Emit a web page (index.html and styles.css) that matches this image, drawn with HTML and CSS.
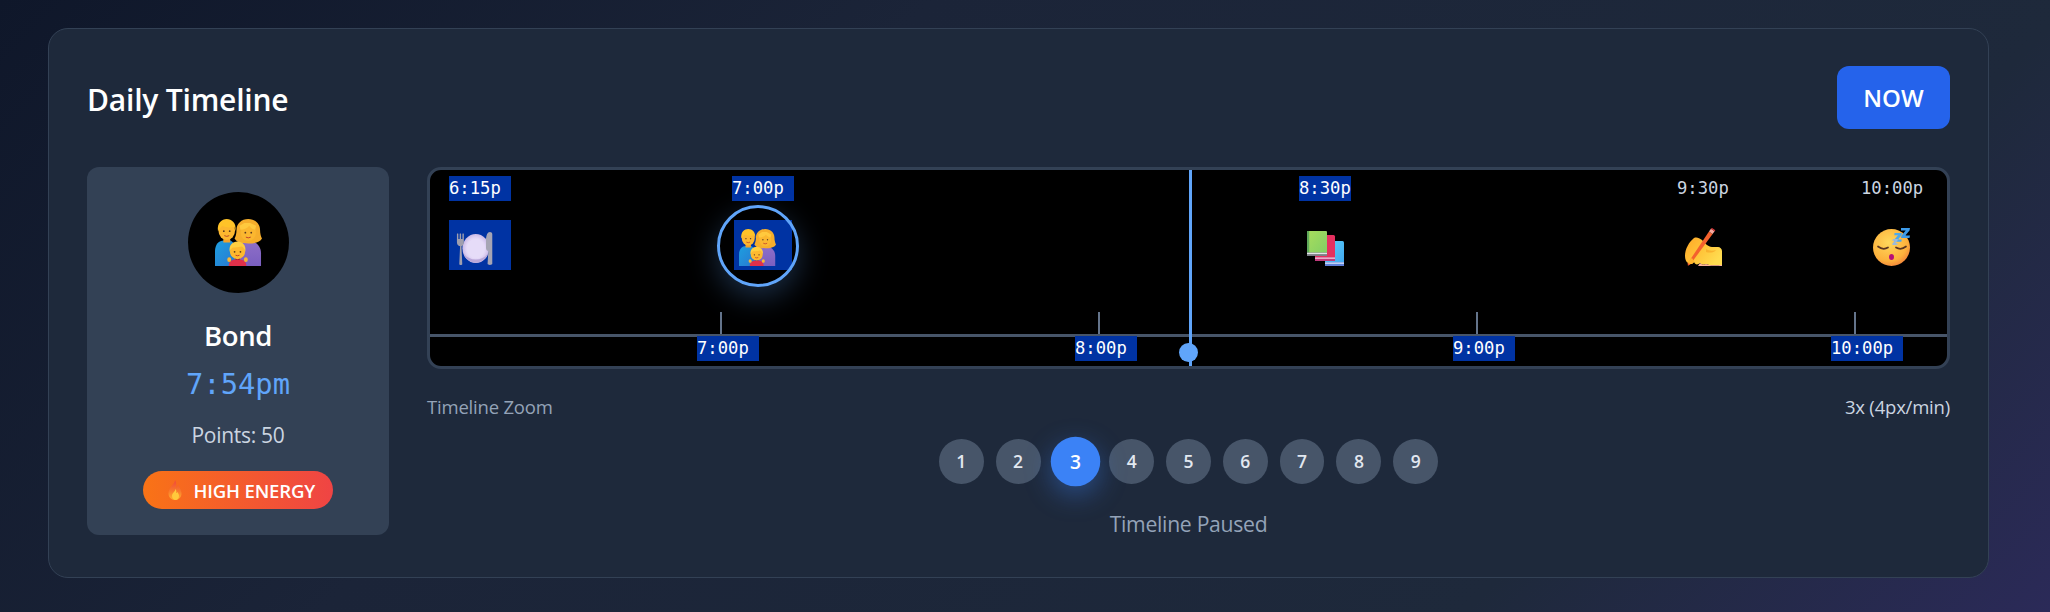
FILE: index.html
```html
<!DOCTYPE html>
<html lang="en">
<head>
<meta charset="utf-8">
<title>Daily Timeline</title>
<link rel="stylesheet" href="styles.css">
</head>
<body>
<svg class="defs" width="0" height="0" aria-hidden="true">
  <defs>
    <linearGradient id="gBlue" x1="0" y1="0" x2="1" y2="1"><stop offset="0" stop-color="#1d9fe0"/><stop offset="1" stop-color="#2a78d0"/></linearGradient>
    <linearGradient id="gPurple" x1="0" y1="0" x2="0" y2="1"><stop offset="0" stop-color="#8f6fc8"/><stop offset="1" stop-color="#7a5fc0"/></linearGradient>
    <radialGradient id="gPlate" cx=".5" cy=".5" r=".5"><stop offset="0" stop-color="#efe6fb"/><stop offset=".72" stop-color="#e2d6f6"/><stop offset="1" stop-color="#c9b9e6"/></radialGradient>
    <linearGradient id="gGreen" x1="0" y1="0" x2="1" y2="1"><stop offset="0" stop-color="#a9dd5c"/><stop offset="1" stop-color="#7fce66"/></linearGradient>
    <linearGradient id="gSky" x1="0" y1="0" x2="1" y2="1"><stop offset="0" stop-color="#5cd2fa"/><stop offset="1" stop-color="#3fa4ee"/></linearGradient>
    <radialGradient id="gFace" cx=".42" cy=".36" r=".72"><stop offset="0" stop-color="#ffd85c"/><stop offset=".7" stop-color="#fdb13c"/><stop offset="1" stop-color="#f0793a"/></radialGradient>
    <linearGradient id="gHand" x1="0" y1="0" x2="1" y2=".6"><stop offset="0" stop-color="#ffa726"/><stop offset=".55" stop-color="#ffc53a"/><stop offset="1" stop-color="#ffdc50"/></linearGradient>
    <linearGradient id="gFlame" x1="0" y1="0" x2="0" y2="1"><stop offset="0" stop-color="#f0443c"/><stop offset=".55" stop-color="#f87a2c"/><stop offset="1" stop-color="#ffb02e"/></linearGradient>

    <symbol id="e-family" viewBox="0 0 48 48">
      <path d="M0 48V33c0-7 4-11 9-11h7l5 4v22z" fill="url(#gBlue)"/>
      <path d="M23 22h10c8 0 14 5 14 13v13H26z" fill="url(#gPurple)"/>
      <path d="M34 0c-7 0-12 5-12 11 0 4-1 7-2 9 2 4 8 5 14 5s12-1 14-5c-1-2-2-5-2-9 0-6-5-11-12-11z" fill="#f6ae2c"/>
      <ellipse cx="34" cy="14" rx="7.800" ry="8.500" fill="#fbb730"/>
      <path d="M26 11c3 0 7-1 9-4 1 2 4 4 6 4l1-4-6-3h-6l-5 3z" fill="#ffc93e"/>
      <circle cx="31" cy="14" r=".9" fill="#5a3a1e"/><circle cx="37" cy="14" r=".9" fill="#5a3a1e"/>
      <path d="M31.500 18.500q2.500 1.500 5 0" stroke="#c2402a" stroke-width="1" fill="none"/>
      <rect x="8.500" y="18" width="7" height="6" fill="#f4a128"/>
      <ellipse cx="12" cy="11.500" rx="8.500" ry="10" fill="#fcb72f"/>
      <path d="M3 12C2 4 7 0 12 0s10 4 9 12l-1.500-4c-3 1-9 1-12-1z" fill="#ffc328"/>
      <circle cx="9" cy="12.500" r=".9" fill="#5a3a1e"/><circle cx="15" cy="12.500" r=".9" fill="#5a3a1e"/>
      <path d="M9.500 17q2.500 1.500 5 0" stroke="#b7472a" stroke-width="1" fill="none"/>
      <path d="M14 48c0-5 3-7 9-7s9 2 9 7z" fill="#e0304a"/>
      <ellipse cx="14.500" cy="41.500" rx="2" ry="2.400" fill="#fbb730"/><ellipse cx="31.500" cy="41.500" rx="2" ry="2.400" fill="#fbb730"/>
      <ellipse cx="23" cy="33" rx="7.800" ry="8" fill="#fdb92f"/>
      <path d="M15 33c-1-6 3-10 8-10s9 4 8 10c-1-3-3-5-4-5-3 1-8 1-9 1-1 1-2 2-3 4z" fill="#ffcf40"/>
      <circle cx="20" cy="33.500" r=".9" fill="#5a3a1e"/><circle cx="26" cy="33.500" r=".9" fill="#5a3a1e"/>
      <path d="M21 37q2 1 4 0" stroke="#c2402a" stroke-width="1" fill="none"/>
    </symbol>

    <symbol id="e-plate" viewBox="0 0 48 42">
      <ellipse cx="25" cy="21" rx="17" ry="18.500" fill="url(#gPlate)"/>
      <path d="M9 26c2 8 9 13 16 13s14-5 16-13c-3 6-9 9-16 9s-13-3-16-9z" fill="#b9a7d9"/>
      <ellipse cx="25" cy="21" rx="11.500" ry="12.500" fill="#e6dcf8"/>
      <path d="M1 2.500c0-.8 1.800-.8 1.800 0V9h1.700V2.500c0-.8 1.800-.8 1.800 0V9H8V2.500c0-.8 1.800-.8 1.800 0V13c0 3-1.500 4.500-3 5l1 23c0 1.300-3.800 1.300-3.800 0l1-23C2.500 17.500 1 16 1 13z" fill="#a09fae"/>
      <path d="M43 0c-3 0-5 4-5 11v9c0 2.500 1 4 3 4l-1 16.500c0 1.800 6 1.800 6 0V3c0-2-1.400-3-3-3z" fill="#a6a5b4"/>
    </symbol>

    <symbol id="e-books" viewBox="0 0 37 35">
      <rect x="18" y="10" width="19" height="25" rx="1.500" fill="url(#gSky)"/>
      <path d="M18 31h19v4H18z" fill="#5f7fd8"/><rect x="18" y="31.500" width="19" height="1.300" fill="#d7e6fb"/>
      <rect x="8" y="4" width="20" height="26" rx="1.500" fill="#e5305f"/>
      <path d="M8 26h20v4H8z" fill="#c03a7c"/><rect x="8" y="26.500" width="20" height="1.300" fill="#f6c9da"/>
      <rect x="0" y="0" width="20" height="25" rx="1" fill="url(#gGreen)"/>
      <rect x="0" y="0" width="2.200" height="25" fill="#5fa85a"/>
      <path d="M0 21.500h20V25H0z" fill="#7c7f86"/><rect x="0" y="21.800" width="20" height="1.300" fill="#e3e6e9"/>
    </symbol>

    <symbol id="e-writing" viewBox="0 0 38 38">
      <path d="M10 10C5 14 1 21 1 28c0 3 1 6 3 7 2 2 5 1 6-1 1 3 4 3 6 1 2 2 4 2 6 1 3 2 12 1 16 1V23c0-2-2-4-4-4h-6c-4 0-7-4-10-7-3-2-5-3-8-2z" fill="url(#gHand)"/>
      <path d="M16 35c2 2 4 2 6 1 3 2 12 1 16 1v1H14z" fill="#ffb39c"/>
      <path d="M6 36.800 3.900 37.500 3.800 35.200 25 3.600l3.600 2.400z" fill="#f4612d"/>
      <path d="M5 37.200 3.900 37.500 3.800 36.200z" fill="#b8442a"/>
      <path d="M25 3.600l1.900-2.900 3.700 2.500-2 2.800z" fill="#f7a9a0"/>
      <path d="M26.900.7 28 0l3.300 2.300-.7.900z" fill="#e53b3b"/>
      <path d="M22 21c3 2 7 2 10 1-2 3-7 3-10 2z" fill="#f7a928" opacity=".75"/>
      <path d="M8 30c1 2 2 3 2 4-1 2-4 3-6 1 0-2 2-4 4-5z" fill="#ffb52e"/>
    </symbol>

    <symbol id="e-sleep" viewBox="0 0 39 39">
      <circle cx="18.500" cy="20.500" r="18.500" fill="url(#gFace)"/>
      <path d="M5 19.500q5 4 10 1M23 20.500q5 3 10-1" stroke="#5a3420" stroke-width="1.700" fill="none" stroke-linecap="round"/>
      <ellipse cx="18.500" cy="30" rx="2.500" ry="3" fill="#b80f76"/>
      <path d="M28 1h9l-.5 2.500-4.200 5h4.700l-.5 2.500h-8.500l.5-2.500 4.200-5H28z" fill="#3d9be9"/>
      <path d="M21.500 6h7.500l-.5 2.200-3.500 4.300h3.800l-.5 2.300h-7.300l.5-2.200 3.500-4.300h-3.700z" fill="#4fa8ea"/>
      <path d="M20 12h5l-.5 1.700-2.200 2.600h2.300l-.4 1.700h-5l.4-1.700 2.200-2.600h-2.500z" fill="#9ab9dc"/>
    </symbol>

    <symbol id="e-fire" viewBox="0 0 14 20">
      <path d="M7 0C7 4 1 7 .500 13c-.300 4 2.700 7 6.500 7s6.800-3 6.500-7C13 9.500 11.500 8 10 5c-.5 2-1 2.500-2 3C8.500 5 8.500 2.500 7 0z" fill="url(#gFlame)"/>
      <path d="M7.500 9C7 12 4 13 4 16c0 2 1.500 4 3.500 4S11 18 11 16c0-2-1-3-1.500-4-.5 1-.8 1-1.200 1 .2-1.500 0-3-.8-4z" fill="#ffc93c"/>
    </symbol>
  </defs>
</svg>

<main class="card">
  <header class="card-head">
    <h1 class="card-title">Daily Timeline</h1>
    <button class="now-btn" type="button">NOW</button>
  </header>

  <div class="card-body">
    <aside class="person">
      <div class="avatar"><svg class="avatar-emoji"><use href="#e-family"/></svg></div>
      <div class="person-name">Bond</div>
      <div class="person-time">7:54pm</div>
      <div class="person-points">Points: 50</div>
      <div class="energy"><svg class="energy-icon"><use href="#e-fire"/></svg><span>HIGH ENERGY</span></div>
    </aside>

    <section class="main">
      <div class="timeline">
        <span class="tl-label sel top a-615">6:15p</span>
        <span class="tl-icon sel a-615 box-plate"><svg class="ic-plate"><use href="#e-plate"/></svg></span>

        <span class="tl-label sel top a-700">7:00p</span>
        <span class="ring"></span>
        <span class="tl-icon sel box-family"><svg class="ic-family"><use href="#e-family"/></svg></span>

        <span class="tl-label sel top a-830">8:30p</span>
        <svg class="tl-svg ic-books"><use href="#e-books"/></svg>

        <span class="tl-label top a-930">9:30p</span>
        <svg class="tl-svg ic-writing"><use href="#e-writing"/></svg>

        <span class="tl-label top a-1000">10:00p</span>
        <svg class="tl-svg ic-sleep"><use href="#e-sleep"/></svg>

        <span class="tick t-7"></span>
        <span class="tick t-8"></span>
        <span class="tick t-9"></span>
        <span class="tick t-10"></span>
        <span class="rule"></span>
        <span class="tl-label sel bottom b-7">7:00p</span>
        <span class="tl-label sel bottom b-8">8:00p</span>
        <span class="tl-label sel bottom b-9">9:00p</span>
        <span class="tl-label sel bottom b-10">10:00p</span>
        <span class="now-line"></span>
        <span class="now-dot"></span>
      </div>

      <div class="zoom-row">
        <span class="zoom-label">Timeline Zoom</span>
        <span class="zoom-value">3x (4px/min)</span>
      </div>

      <div class="zoom-btns">
        <button class="zb" type="button">1</button>
        <button class="zb" type="button">2</button>
        <button class="zb active" type="button">3</button>
        <button class="zb" type="button">4</button>
        <button class="zb" type="button">5</button>
        <button class="zb" type="button">6</button>
        <button class="zb" type="button">7</button>
        <button class="zb" type="button">8</button>
        <button class="zb" type="button">9</button>
      </div>

      <div class="status">Timeline Paused</div>
    </section>
  </div>
</main>
</body>
</html>
```

FILE: styles.css
```css
* { box-sizing: border-box; }

html, body { margin: 0; height: 612px; overflow: hidden; }

body {
  padding: 28px 61px 34px 48px;
  background: linear-gradient(135deg, #0f172a 0%, #1b2438 35%, #1e293b 78%, #2b2a58 100%);
  font-family: "Open Sans", "Noto Sans", sans-serif;
  color: #fff;
}

.defs { position: absolute; }

.card {
  height: 550px;
  padding: 37px 38px;
  background: #1e293b;
  border: 1px solid #334155;
  border-radius: 20px;
}

.card-head {
  display: flex;
  align-items: center;
  justify-content: space-between;
  height: 63px;
  margin-bottom: 38px;
}

.card-title { margin: 5px 0 0; font-size: 30px; font-weight: 600; line-height: 1; letter-spacing: -0.2px; }

.now-btn {
  width: 113px;
  height: 63px;
  border: 0;
  border-radius: 12px;
  background: #2563eb;
  color: #fff;
  font: 600 24px "Open Sans", sans-serif;
}

.card-body { display: flex; gap: 38px; }

.person {
  display: flex;
  flex-direction: column;
  align-items: center;
  width: 302px;
  height: 368px;
  padding-top: 25px;
  flex: none;
  background: #334155;
  border-radius: 12px;
}

.avatar {
  display: flex;
  align-items: center;
  justify-content: center;
  width: 101px;
  height: 101px;
  border-radius: 50%;
  background: #000;
}

.avatar-emoji { width: 47px; height: 47px; }

.person-name { margin-top: 25px; font-size: 27.5px; font-weight: 600; line-height: 36px; letter-spacing: -0.4px; }

.person-time {
  margin-top: 11px;
  font-family: "DejaVu Sans Mono", monospace;
  font-size: 28.8px;
  line-height: 38px;
  color: #60a5fa;
}

.person-points { margin-top: 18px; font-size: 21px; line-height: 28px; color: #cbd5e1; letter-spacing: -0.3px; }

.energy {
  display: flex;
  align-items: center;
  justify-content: flex-end;
  gap: 12px;
  width: 190px;
  height: 38px;
  margin-top: 22px;
  padding-right: 18px;
  border-radius: 19px;
  background: linear-gradient(90deg, #f97316, #ef4444);
  font-size: 18.6px;
  font-weight: 600;
  letter-spacing: -0.2px;
}

.energy-icon { width: 14px; height: 20px; }

.main { flex: 1; min-width: 0; display: flex; flex-direction: column; }

.timeline {
  position: relative;
  height: 202px;
  flex: none;
  overflow: hidden;
  background: #000;
  border: 3px solid #334155;
  border-radius: 14px;
}

.tl-label {
  position: absolute;
  height: 25px;
  font-family: "DejaVu Sans Mono", monospace;
  font-size: 17.2px;
  line-height: 25px;
  color: #cbd5e1;
  white-space: nowrap;
}

.tl-label.top { top: 6px; }
.tl-label.bottom { top: 166px; }

.sel { background: #0033a3; color: #fff; }

.tl-label.sel { width: 62px; }
.a-615 { left: 19px; }
.a-700 { left: 302px; }
.tl-label.sel.a-830 { left: 869px; width: 52px; }
.a-930 { left: 1247px; }
.a-1000 { left: 1431px; }
.b-7 { left: 267px; }
.b-8 { left: 645px; }
.b-9 { left: 1023px; }
.tl-label.sel.b-10 { left: 1401px; width: 72px; }

.tl-icon {
  position: absolute;
  top: 50px;
  height: 50px;
  display: block;
}

.box-plate { width: 62px; }
.box-family { left: 304px; width: 58px; }

.ic-plate { position: absolute; left: 7px; top: 12px; width: 38px; height: 33px; }
.ic-family { position: absolute; left: 5px; top: 9px; width: 37px; height: 37px; }

.ring {
  position: absolute;
  left: 287px;
  top: 35px;
  width: 82px;
  height: 82px;
  border: 3px solid #60a5fa;
  border-radius: 50%;
  box-shadow: 0 10px 30px rgba(96, 165, 250, .28);
  z-index: 2;
}

.tl-svg { position: absolute; }
.ic-books { left: 877px; top: 61px; width: 37px; height: 35px; }
.ic-writing { left: 1254px; top: 58px; width: 38px; height: 38px; }
.ic-sleep { left: 1443px; top: 57px; width: 39px; height: 39px; }

.tick { position: absolute; top: 142px; width: 2px; height: 22px; background: #64748b; }
.t-7 { left: 290px; }
.t-8 { left: 668px; }
.t-9 { left: 1046px; }
.t-10 { left: 1424px; }

.rule { position: absolute; left: 0; right: 0; top: 164px; height: 3px; background: #475569; }

.now-line { position: absolute; left: 759px; top: 0; bottom: 0; width: 3px; background: #60a5fa; z-index: 3; }

.now-dot {
  position: absolute;
  left: 749px;
  top: 173px;
  width: 19px;
  height: 19px;
  border-radius: 50%;
  background: #60a5fa;
  z-index: 3;
}

.zoom-row {
  display: flex;
  justify-content: space-between;
  align-items: center;
  height: 24px;
  margin-top: 25px;
  font-size: 18.5px;
  letter-spacing: -0.2px;
}

.zoom-label { color: #94a3b8; }
.zoom-value { color: #cbd5e1; }

.zoom-btns {
  display: flex;
  justify-content: center;
  gap: 12px;
  margin-top: 21px;
}

.zb {
  width: 44.8px;
  height: 44.8px;
  padding: 0;
  border: 0;
  border-radius: 50%;
  background: #475569;
  color: #e2e8f0;
  font: 600 17.5px "Open Sans", sans-serif;
}

.zb.active {
  transform: scale(1.1);
  background: #3b82f6;
  color: #fff;
  box-shadow: 0 8px 24px rgba(59, 130, 246, .4);
}

.status {
  margin-top: 26px;
  text-align: center;
  font-size: 21.2px;
  line-height: 28px;
  color: #94a3b8;
  letter-spacing: -0.3px;
}
```
